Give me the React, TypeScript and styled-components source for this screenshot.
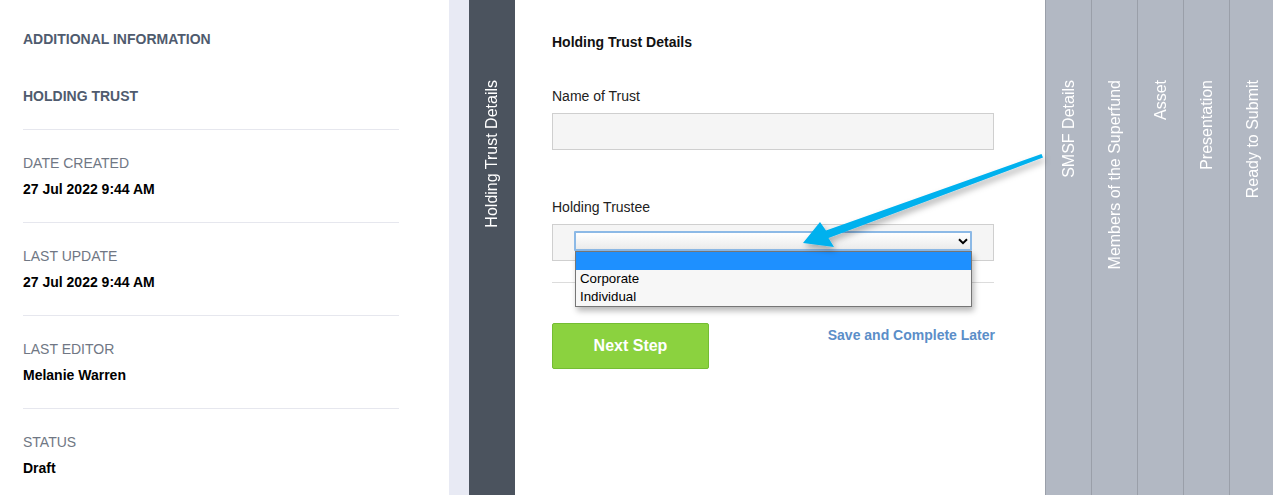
import React from 'react';
import styled, { createGlobalStyle } from 'styled-components';

const GlobalStyle = createGlobalStyle`
  html, body { margin: 0; padding: 0; background: #fff; }
  body { font-family: "Liberation Sans", Arial, sans-serif; overflow: hidden; }
`;

const Page = styled.div`
  position: relative;
  display: flex;
  height: 495px;
  width: 1273px;
  overflow: hidden;
`;

const Sidebar = styled.aside`
  width: 449px;
  flex-shrink: 0;
  box-sizing: border-box;
  padding: 0 50px 0 23px;
  background: #fff;
`;

const SideTitle = styled.div<{ $top: number }>`
  margin-top: ${p => p.$top}px;
  font-size: 14px;
  line-height: 16px;
  font-weight: bold;
  color: #4f5b6e;
  text-transform: uppercase;
`;

const Divider = styled.div`
  height: 1px;
  background: #e6e7ee;
  margin-top: 25px;
`;

const MetaLabel = styled.div`
  margin-top: 25px;
  font-size: 14px;
  line-height: 16px;
  color: #707784;
  text-transform: uppercase;
`;

const MetaValue = styled.div`
  margin-top: 10px;
  font-size: 14px;
  line-height: 16px;
  font-weight: bold;
  color: #000;
`;

const Gutter = styled.div`
  width: 20px;
  flex-shrink: 0;
  background: #e8eaf4;
`;

const StepTab = styled.div<{ $active?: boolean }>`
  width: 46px;
  flex-shrink: 0;
  box-sizing: border-box;
  display: flex;
  justify-content: center;
  padding-top: 80px;
  background: ${p => (p.$active ? '#4b535e' : '#b2b8c3')};
  border-left: ${p => (p.$active ? 'none' : '1px solid #9a9fa9')};
  color: #fff;
`;

const TabText = styled.span`
  writing-mode: vertical-rl;
  transform: rotate(180deg);
  font-size: 16px;
  line-height: 18px;
  white-space: nowrap;
  height: max-content;
`;

const Content = styled.main`
  width: 530px;
  flex-shrink: 0;
  box-sizing: border-box;
  padding: 34px 51px 0 37px;
  background: #fff;
`;

const FormTitle = styled.h2`
  margin: 0;
  font-size: 14px;
  line-height: 16px;
  font-weight: bold;
  color: #111;
`;

const FieldLabel = styled.label<{ $top: number }>`
  display: block;
  margin-top: ${p => p.$top}px;
  font-size: 14px;
  line-height: 16px;
  color: #222;
`;

const TextField = styled.div`
  margin-top: 9px;
  height: 37px;
  box-sizing: border-box;
  border: 1px solid #cfcfcf;
  background: #f5f5f5;
`;

const SelectShell = styled.div`
  margin-top: 9px;
  height: 37px;
  box-sizing: border-box;
  border: 1px solid #cfcfcf;
  background: #f5f5f5;
  padding: 6px 21px 0 21px;
`;

const SelectAnchor = styled.div`
  position: relative;
`;

const FakeSelect = styled.div`
  height: 20px;
  box-sizing: border-box;
  border: 2px solid #8cb9e6;
  border-radius: 1px;
  background: linear-gradient(#ffffff, #ebebeb);
  display: flex;
  align-items: center;
  justify-content: flex-end;
  padding-right: 2px;
`;

const OptionList = styled.ul`
  position: absolute;
  top: 20px;
  left: 1px;
  width: 397px;
  margin: 0;
  padding: 0;
  list-style: none;
  box-sizing: border-box;
  border: 1px solid #767676;
  background: #f7f7f7;
  box-shadow: 2px 4px 6px rgba(0, 0, 0, 0.28);
  z-index: 2;
`;

const OptionRow = styled.li<{ $selected?: boolean }>`
  height: 18px;
  line-height: 18px;
  padding-left: 4px;
  font-size: 13.3px;
  color: #000;
  background: ${p => (p.$selected ? '#1e90ff' : 'transparent')};
`;

const Rule = styled.hr`
  margin: 21px 0 0;
  border: none;
  height: 1px;
  background: #dcdcdc;
`;

const Actions = styled.div`
  margin-top: 40px;
  display: flex;
  justify-content: space-between;
  align-items: flex-start;
  margin-right: -1px;
`;

const NextButton = styled.button`
  width: 157px;
  height: 46px;
  border: 1px solid #74bd33;
  border-radius: 2px;
  background: #8bd23f;
  color: #fff;
  font-family: inherit;
  font-size: 16px;
  font-weight: bold;
`;

const LaterLink = styled.a`
  margin-top: 4px;
  font-size: 14px;
  line-height: 16px;
  font-weight: bold;
  color: #5b8ec8;
  text-decoration: none;
`;

const ArrowLayer = styled.svg`
  position: absolute;
  left: 0;
  top: 0;
  pointer-events: none;
  z-index: 5;
`;

const meta = [
  { label: 'Date Created', value: '27 Jul 2022 9:44 AM' },
  { label: 'Last Update', value: '27 Jul 2022 9:44 AM' },
  { label: 'Last Editor', value: 'Melanie Warren' },
  { label: 'Status', value: 'Draft' },
];

const steps = ['SMSF Details', 'Members of the Superfund', 'Asset', 'Presentation', 'Ready to Submit'];

const Chevron = () => (
  <svg width="10" height="7" viewBox="0 0 10 7">
    <path d="M1 1.2 L5 5.2 L9 1.2" fill="none" stroke="#000" strokeWidth="2" />
  </svg>
);

export default function App() {
  return (
    <>
      <GlobalStyle />
      <Page>
        <Sidebar>
          <SideTitle $top={31}>Additional Information</SideTitle>
          <SideTitle $top={41}>Holding Trust</SideTitle>
          <Divider />
          {meta.map((m, i) => (
            <React.Fragment key={m.label}>
              <MetaLabel>{m.label}</MetaLabel>
              <MetaValue>{m.value}</MetaValue>
              {i < meta.length - 1 && <Divider />}
            </React.Fragment>
          ))}
        </Sidebar>
        <Gutter />
        <StepTab $active>
          <TabText>Holding Trust Details</TabText>
        </StepTab>
        <Content>
          <FormTitle>Holding Trust Details</FormTitle>
          <FieldLabel $top={38}>Name of Trust</FieldLabel>
          <TextField />
          <FieldLabel $top={49}>Holding Trustee</FieldLabel>
          <SelectShell>
            <SelectAnchor>
              <FakeSelect>
                <Chevron />
              </FakeSelect>
              <OptionList>
                <OptionRow $selected>&nbsp;</OptionRow>
                <OptionRow>Corporate</OptionRow>
                <OptionRow>Individual</OptionRow>
              </OptionList>
            </SelectAnchor>
          </SelectShell>
          <Rule />
          <Actions>
            <NextButton>Next Step</NextButton>
            <LaterLink href="#">Save and Complete Later</LaterLink>
          </Actions>
        </Content>
        {steps.map(s => (
          <StepTab key={s}>
            <TabText>{s}</TabText>
          </StepTab>
        ))}
        <ArrowLayer width="1273" height="495" viewBox="0 0 1273 495">
          <defs>
            <filter id="arrowShadow" x="-10%" y="-30%" width="130%" height="180%">
              <feDropShadow dx="2" dy="4" stdDeviation="3" floodColor="#000" floodOpacity="0.3" />
            </filter>
          </defs>
          <polygon
            points="803,243 820,222 826,230.5 1041.5,154 1043,157.5 828.5,238 834,247"
            fill="#00b1ee"
            filter="url(#arrowShadow)"
          />
        </ArrowLayer>
      </Page>
    </>
  );
}
